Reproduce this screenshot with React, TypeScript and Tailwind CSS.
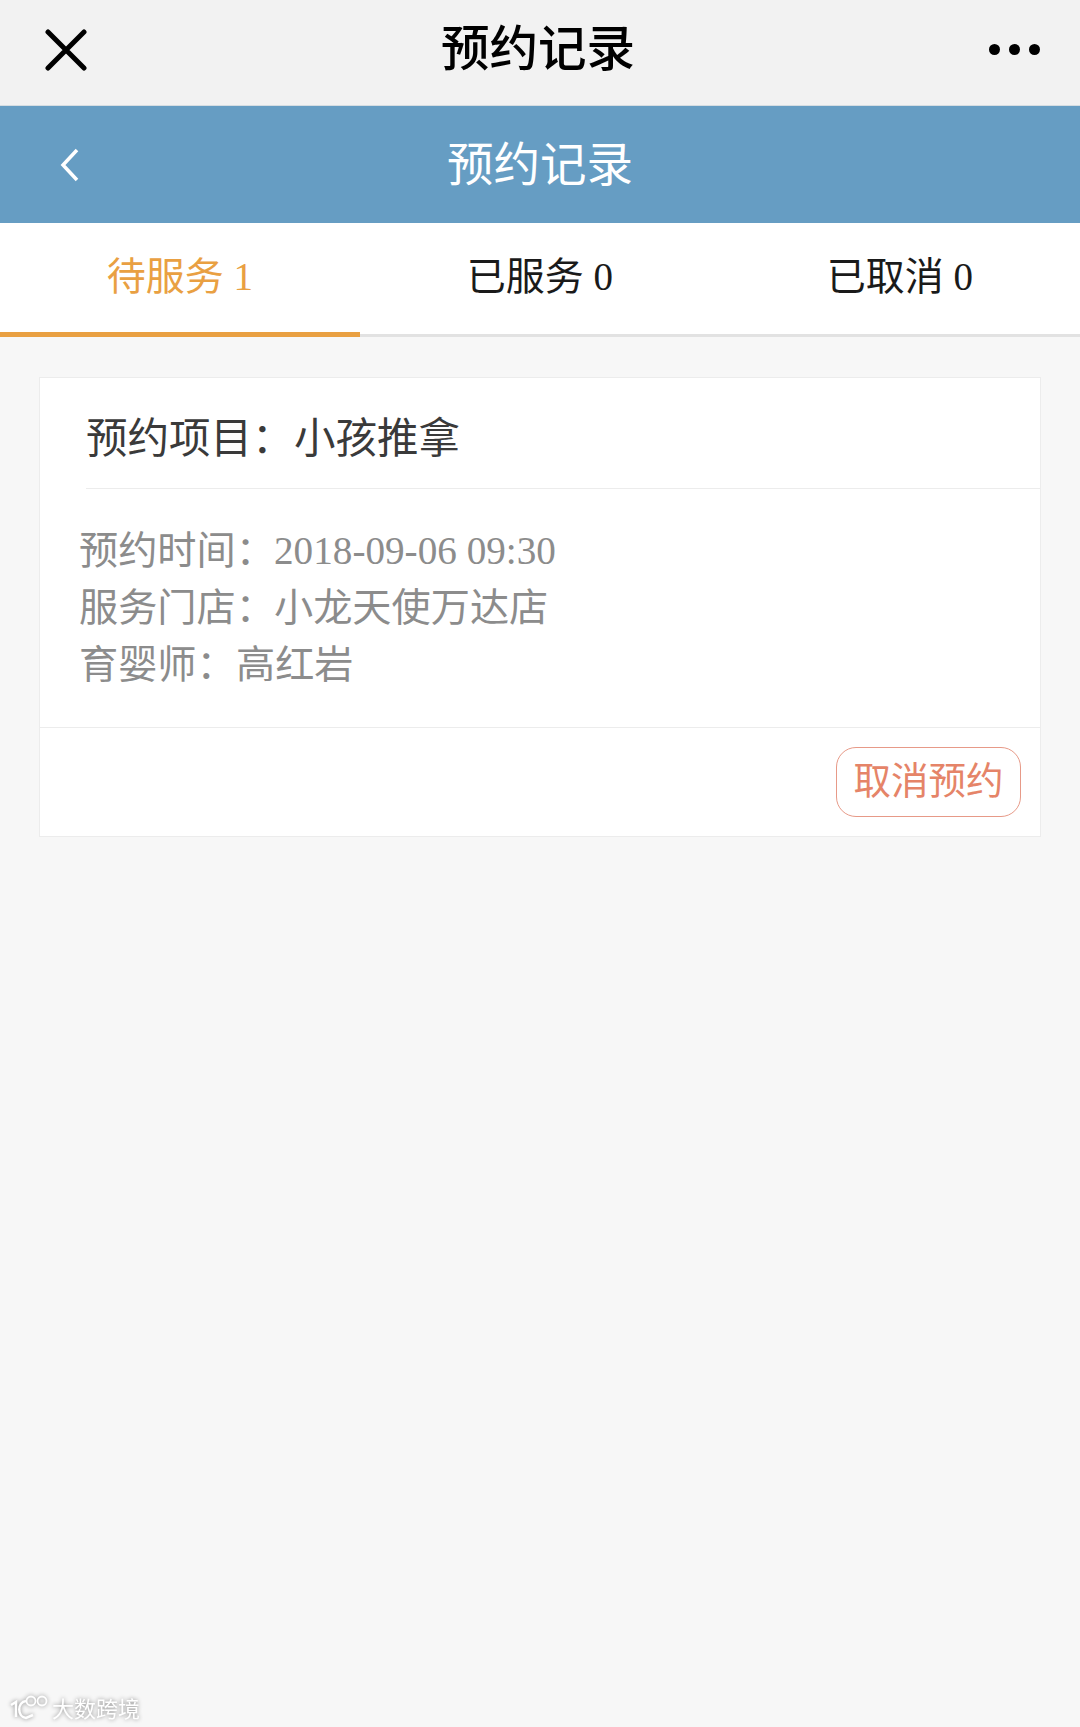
import React from 'react';

const font = "font-['Liberation_Serif','Noto_Sans_CJK_SC',serif]";

const tabs = [
  { label: '待服务 1', active: true },
  { label: '已服务 0', active: false },
  { label: '已取消 0', active: false },
];

const details = [
  { label: '预约时间：', value: '2018-09-06 09:30' },
  { label: '服务门店：', value: '小龙天使万达店' },
  { label: '育婴师：', value: '高红岩' },
];

const App: React.FC = () => {
  return (
    <div className={`relative h-[1727px] w-[1080px] overflow-hidden bg-[#f7f7f7] ${font}`}>
      {/* wechat bar */}
      <div className="flex h-[105px] items-center justify-between bg-[#f2f2f2] pb-[6px] pl-[45px] pr-[40px]">
        <svg width="42" height="42" viewBox="0 0 42 42">
          <path d="M3 3 L39 39 M39 3 L3 39" stroke="#000" strokeWidth="5" strokeLinecap="round" />
        </svg>
        <div className="text-[48.5px] font-medium leading-[60px] text-black">预约记录</div>
        <div className="flex gap-[9px]">
          <span className="h-[11px] w-[11px] rounded-full bg-black" />
          <span className="h-[11px] w-[11px] rounded-full bg-black" />
          <span className="h-[11px] w-[11px] rounded-full bg-black" />
        </div>
      </div>

      {/* header */}
      <div className="relative flex h-[118px] items-center justify-center border-t border-[#d5dde2] bg-[#669dc3] pt-[2px]">
        <svg width="22" height="34" viewBox="0 0 22 34" className="absolute left-[59px] top-[42px]">
          <path d="M18 2 L4 17 L18 32" fill="none" stroke="#fff" strokeWidth="3.5" />
        </svg>
        <div className="text-[46.5px] leading-[60px] text-white">预约记录</div>
      </div>

      {/* tabs */}
      <div className="flex h-[114px] border-b-[3px] border-[#e2e2e2] bg-white">
        {tabs.map((t) => (
          <div
            key={t.label}
            className={`-mb-[3px] flex h-[114px] flex-1 justify-center pt-[27px] text-[39px] leading-[54px] ${
              t.active ? 'border-b-[5px] border-[#e9a042] text-[#e9a042]' : 'text-[#1a1a1a]'
            }`}
          >
            {t.label}
          </div>
        ))}
      </div>

      {/* card */}
      <div className="mx-[39px] mt-[40px] border border-[#ececec] bg-white">
        <div className="ml-[46px] flex border-b border-[#ececec] pb-[22px] pt-[34px] text-[41.5px] leading-[54px] text-[#3a3a3a]">
          <span className="w-[208px] whitespace-nowrap">预约项目：</span>
          <span>小孩推拿</span>
        </div>
        <div className="px-[39px] pb-[34px] pt-[33px] text-[39.2px] leading-[57px] text-[#8c8c8c]">
          {details.map((d) => (
            <div key={d.label} className="flex whitespace-nowrap">
              <span className={d.label.length === 5 ? 'w-[195px]' : 'w-[157px]'}>{d.label}</span>
              <span>{d.value}</span>
            </div>
          ))}
        </div>
        <div className="flex justify-end border-t border-[#ececec] pb-[19px] pr-[19px] pt-[19px]">
          <div className="flex h-[70px] w-[185px] items-center justify-center rounded-[20px] border border-[#e79a88] text-[37.5px] text-[#e58468]">
            取消预约
          </div>
        </div>
      </div>

      {/* watermark */}
      <div className="absolute bottom-[6px] left-[9px] flex items-center gap-[3px] drop-shadow-[0_0_2px_#888]">
        <svg width="40" height="27" viewBox="0 0 40 27" fill="none" stroke="#fff">
          <path d="M2 11 L7 8 V23" strokeWidth="2.5" />
          <path d="M17 7 C8 8 8 23 17 24 L24 21" strokeWidth="2.5" />
          <circle cx="22" cy="7" r="4.5" strokeWidth="1.8" />
          <circle cx="33" cy="7" r="4.5" strokeWidth="1.8" />
        </svg>
        <span className="font-['Noto_Sans_CJK_SC',sans-serif] text-[22px] leading-[28px] text-white">
          大数跨境
        </span>
      </div>
    </div>
  );
};

export default App;
